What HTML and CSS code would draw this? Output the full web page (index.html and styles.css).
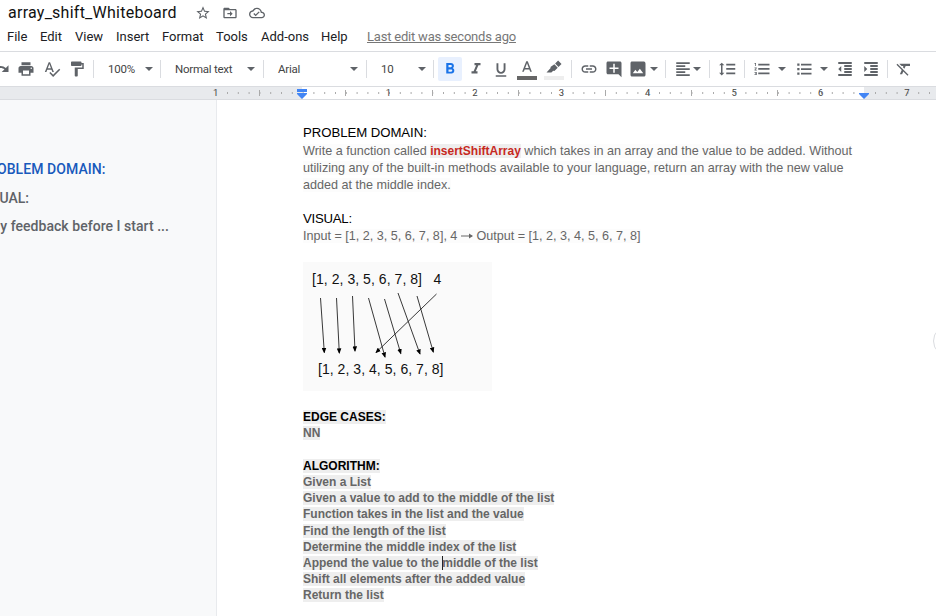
FILE: index.html
```html
<!DOCTYPE html>
<html lang="en">
<head>
<meta charset="utf-8">
<title>array_shift_Whiteboard</title>
<link rel="stylesheet" href="styles.css">
</head>
<body>
<header class="header">
  <div class="title-row">
    <h1 class="title">array_shift_Whiteboard</h1>
    <svg class="title-icon star" viewBox="0 0 24 24"><path d="M22 9.24l-7.19-.62L12 2 9.19 8.63 2 9.24l5.46 4.73L5.82 21 12 17.27 18.18 21l-1.63-7.03L22 9.24zM12 15.4l-3.76 2.27 1-4.28-3.32-2.88 4.38-.38L12 6.1l1.71 4.04 4.38.38-3.32 2.88 1 4.28L12 15.4z"/></svg>
    <svg class="title-icon folder" viewBox="0 0 24 24"><path d="M20 6h-8l-2-2H4c-1.100 0-2 .9-2 2v12c0 1.100.9 2 2 2h16c1.100 0 2-.9 2-2V8c0-1.100-.9-2-2-2zm0 12H4V8h16v10zM12 17l4-4-4-4v3H8v2h4v3z"/></svg>
    <svg class="title-icon cloud" viewBox="0 0 24 24"><path d="M19.350 10.040C18.670 6.590 15.640 4 12 4 9.110 4 6.600 5.640 5.350 8.040 2.340 8.360 0 10.910 0 14c0 3.310 2.690 6 6 6h13c2.760 0 5-2.240 5-5 0-2.640-2.050-4.780-4.650-4.960zM19 18H6c-2.210 0-4-1.790-4-4 0-2.050 1.530-3.760 3.560-3.970l1.070-.11.5-.95C8.080 7.140 9.940 6 12 6c2.620 0 4.880 1.860 5.390 4.430l.3 1.500 1.530.11c1.560.1 2.780 1.410 2.780 2.960 0 1.650-1.350 3-3 3zM10 14.180l-2.090-2.090L6.500 13.500 10 17l6.010-6.010-1.410-1.410z"/></svg>
  </div>
  <nav class="menu">
    <span class="m-file">File</span><span class="m-edit">Edit</span><span class="m-view">View</span><span class="m-insert">Insert</span><span class="m-format">Format</span><span class="m-tools">Tools</span><span class="m-addons">Add-ons</span><span class="m-help">Help</span><span class="last-edit">Last edit was seconds ago</span>
  </nav>
</header>

<div class="toolbar">
  <span class="tool redo"><svg viewBox="0 0 24 24"><path d="M18.400 10.600C16.550 8.990 14.150 8 11.500 8c-4.650 0-8.580 3.030-9.960 7.220L3.900 16c1.050-3.190 4.050-5.500 7.600-5.500 1.950 0 3.730.72 5.120 1.880L13 16h9V7l-3.600 3.600z"/></svg></span>
  <span class="tool w26"><svg viewBox="0 0 24 24"><path d="M19 8H5c-1.660 0-3 1.340-3 3v6h4v4h12v-4h4v-6c0-1.660-1.340-3-3-3zm-3 11H8v-5h8v5zm3-7c-.55 0-1-.45-1-1s.45-1 1-1 1 .45 1 1-.45 1-1 1zm-1-9H6v4h12V3z"/></svg></span>
  <span class="tool w26"><svg viewBox="0 0 24 24"><path d="M12.450 16h2.090L9.430 3H7.570L2.460 16h2.090l1.120-3h5.640l1.140 3zm-6.020-5L8.500 5.480 10.570 11H6.430zm15.160.59l-8.090 8.090L9.830 16l-1.410 1.410 5.090 5.090L23 13l-1.410-1.410z"/></svg></span>
  <span class="tool w24"><svg viewBox="0 0 24 24"><path d="M18 4V3c0-.55-.45-1-1-1H5c-.55 0-1 .45-1 1v4c0 .55.45 1 1 1h12c.55 0 1-.45 1-1V6h1v4H9v11c0 .55.45 1 1 1h2c.55 0 1-.45 1-1v-9h8V4h-3z"/></svg></span>
  <i class="sep"></i>
  <span class="select zoom">100%<b class="caret"></b></span>
  <i class="sep"></i>
  <span class="select style">Normal text<b class="caret"></b></span>
  <i class="sep"></i>
  <span class="select font">Arial<b class="caret"></b></span>
  <i class="sep"></i>
  <span class="select size">10<b class="caret"></b></span>
  <i class="sep"></i>
  <span class="tool active"><svg viewBox="0 0 24 24"><path d="M15.600 10.790c.97-.67 1.650-1.770 1.650-2.790 0-2.260-1.750-4-4-4H7v14h7.040c2.090 0 3.710-1.700 3.710-3.790 0-1.520-.86-2.820-2.150-3.420zM10 6.500h3c.83 0 1.500.67 1.500 1.500s-.67 1.500-1.500 1.500h-3v-3zm3.500 9H10v-3h3.500c.83 0 1.500.67 1.500 1.500s-.67 1.500-1.500 1.500z"/></svg></span>
  <span class="tool w25"><svg viewBox="0 0 24 24"><path d="M10 4v3h2.210l-3.420 8H6v3h8v-3h-2.210l3.420-8H18V4z"/></svg></span>
  <span class="tool w25 underline"><svg viewBox="0 0 24 24"><path d="M12 17c3.310 0 6-2.690 6-6V3h-2.500v8c0 1.930-1.570 3.500-3.500 3.500S8.500 12.930 8.500 11V3H6v8c0 3.310 2.690 6 6 6zm-7 2v2h14v-2H5z"/></svg></span>
  <span class="tool swatch text-color"><svg viewBox="0 0 24 24"><path d="M11 3L5.500 17h2.250l1.120-3h6.250l1.120 3h2.250L13 3h-2zm-1.380 9L12 5.670 14.380 12H9.620z"/></svg></span>
  <span class="tool swatch highlight"><svg viewBox="0 0 24 24"><path d="M17.500 2l4.500 4.500-4 4L13.500 6zM12.500 7l4.500 4.500-4.500 4.500-1.500-.5L8.500 18H2l5.500-6-.2-1.400z"/></svg></span>
  <i class="sep"></i>
  <span class="tool w25"><svg viewBox="0 0 24 24"><path d="M3.900 12c0-1.710 1.390-3.100 3.100-3.100h4V7H7c-2.760 0-5 2.240-5 5s2.240 5 5 5h4v-1.900H7c-1.710 0-3.100-1.390-3.100-3.100zM8 13h8v-2H8v2zm9-6h-4v1.900h4c1.710 0 3.100 1.390 3.100 3.100s-1.390 3.100-3.100 3.100h-4V17h4c2.760 0 5-2.240 5-5s-2.240-5-5-5z"/></svg></span>
  <span class="tool w25"><svg viewBox="0 0 24 24"><path d="M22 4c0-1.100-.9-2-2-2H4c-1.100 0-2 .9-2 2v13c0 1.100.9 2 2 2h14l4 4V4zm-4 8h-5v5h-2v-5H6v-2h5V5h2v5h5v2z"/></svg></span>
  <span class="tool image"><svg viewBox="0 0 24 24"><path d="M22 19V5c0-1.660-.9-3-2-3H4C2.900 2 2 2.900 2 4v16c0 1.100.9 2 2 2h16c1.100 0 2-.9 2-2v-1zM8.500 13l2.500 3.010L14.500 11.500 19 17.500H5L8.500 13z"/></svg><b class="caret"></b></span>
  <i class="sep"></i>
  <span class="tool align"><svg viewBox="0 0 24 24"><path d="M3 3h18v2.200H3zM3 7h12v2.200H3zM3 11h18v2.200H3zM3 15h12v2.200H3zM3 19h18v2.200H3z"/></svg><b class="caret"></b></span>
  <i class="sep narrow"></i>
  <span class="tool w27"><svg viewBox="0 0 24 24"><path d="M6 7h2.500L5 3.500 1.500 7H4v10H1.500L5 20.500 8.500 17H6V7zm5-2v2.200h12V5H11zm0 14h12v-2.200H11V19zm0-6h12v-2.200H11V13z"/></svg></span>
  <i class="sep"></i>
  <span class="tool numbers"><svg viewBox="0 0 24 24"><path d="M2 17h2v.5H3v1h1v.5H2v1h3v-4H2v1zm1-9h1V4H2v1h1v3zm-1 3h1.800L2 13.100v.9h3v-1H3.200L5 10.900V10H2v1zm5-6v2.200h15V5H7zm0 14h15v-2.200H7V19zm0-6h15v-2.200H7V13z"/></svg><b class="caret"></b></span>
  <span class="tool bullets"><svg viewBox="0 0 24 24"><path d="M3 4.500h3v3H3zM3 10.500h3v3H3zM3 16.500h3v3H3zM8 5h14v2.200H8zM8 11h14v2.200H8zM8 17h14v2.200H8z"/></svg><b class="caret"></b></span>
  <span class="tool w26"><svg viewBox="0 0 24 24"><path d="M11 17.200h10v-2.400H11v2.400zm-8-5.200l4 4V8l-4 4zm0 9.200h18v-2.400H3v2.400zM3 2.800v2.400h18V2.800H3zm8 6.400h10V6.800H11v2.400zm0 4h10v-2.400H11v2.400z"/></svg></span>
  <span class="tool w25"><svg viewBox="0 0 24 24"><path d="M3 21.200h18v-2.400H3v2.400zM3 8v8l4-4-4-4zm8 9.200h10v-2.400H11v2.400zM3 2.800v2.400h18V2.800H3zm8 6.400h10V6.800H11v2.400zm0 4h10v-2.400H11v2.400z"/></svg></span>
  <i class="sep"></i>
  <span class="tool w24"><svg viewBox="0 0 24 24"><path d="M3.270 5L2 6.270l6.970 6.970L6.500 19h3l1.570-3.660L16.730 21 18 19.730 3.550 5.270 3.270 5zM6 5v.18L8.820 8h2.400l-.72 1.680 2.100 2.100L14.210 8H20V5H6z"/></svg></span>
</div>

<svg class="ruler" width="936" height="14" viewBox="0 0 936 14">
  <rect class="margin" x="0" y="0" width="302" height="14"/>
  <rect class="margin" x="864" y="0" width="72" height="14"/>
  <path class="tick minor" d="M227 7h636M875 7h61"/>
  <path class="tick half" d="M259.500 4v6M345.500 4v6M432.500 4v6M518.500 4v6M605.500 4v6M691.500 4v6M777.500 4v6"/>
  <path class="edge" d="M0 .5h936M0 13.500h936"/>
  <g class="numbers-row">
    <text x="215.600" y="10">1</text><text x="388.500" y="10">1</text><text x="475" y="10">2</text><text x="561.300" y="10">3</text><text x="647.700" y="10">4</text><text x="734.200" y="10">5</text><text x="820.600" y="10">6</text><text x="907" y="10">7</text>
  </g>
  <path class="marker" d="M297 3h10v3h-10zM297 7h10v1l-5 5-5-5zM859 7h10v1l-5 5-5-5z"/>
</svg>

<main class="workspace">
  <aside class="outline">
    <div class="entry current">PROBLEM DOMAIN:</div>
    <div class="entry visual">VISUAL:</div>
    <div class="entry feedback">My feedback before I start ...</div>
  </aside>
  <article class="page">
    <h2 class="heading problem">PROBLEM DOMAIN:</h2>
    <p class="body"><span>Write a function called <strong>insertShiftArray</strong> which takes in an array and the value to be added. Without</span></p>
    <p class="body"><span>utilizing any of the built-in methods available to your language, return an array with the new value</span></p>
    <p class="body"><span>added at the middle index.</span></p>
    <h2 class="heading second">VISUAL:</h2>
    <p class="body"><span>Input = [1, 2, 3, 5, 6, 7, 8], 4 <svg class="arrow" viewBox="0 0 12 8"><path d="M0 4h11"/><path class="tip" d="M8 1.500L12 4 8 6.500z"/></svg> Output = [1, 2, 3, 4, 5, 6, 7, 8]</span></p>
    <svg class="figure" width="189" height="129" viewBox="0 0 189 129">
      <defs><marker id="head" viewBox="0 0 6 5" refX="5" refY="2.500" markerWidth="5.500" markerHeight="5" orient="auto" markerUnits="userSpaceOnUse"><path d="M0 0l6 2.500L0 5z"/></marker></defs>
      <text x="9" y="22.200" textLength="110">[1, 2, 3, 5, 6, 7, 8]</text>
      <text x="130.500" y="22.200">4</text>
      <text x="15" y="112.200" textLength="125.500">[1, 2, 3, 4, 5, 6, 7, 8]</text>
      <g class="arrows"><path d="M17.500 36L21.300 90.500"/><path d="M33.500 36L36.300 91"/><path d="M49.500 34L52 89"/><path d="M65.500 36L82 95"/><path d="M81.500 37L97.800 91.500"/><path d="M95 31L117 92"/><path d="M114 34L130.300 90"/><path d="M133.500 32L73 90.500"/></g>
    </svg>
    <section class="notes">
      <p class="black"><span>EDGE CASES:</span></p>
      <p><span>NN</span></p>
      <p>&nbsp;</p>
      <p class="black"><span>ALGORITHM:</span></p>
      <p><span>Given a List</span></p>
      <p><span>Given a value to add to the middle of the list</span></p>
      <p><span>Function takes in the list and the value</span></p>
      <p><span>Find the length of the list</span></p>
      <p><span>Determine the middle index of the list</span></p>
      <p><span>Append the value to the <i class="cursor"></i>middle of the list</span></p>
      <p><span>Shift all elements after the added value</span></p>
      <p><span>Return the list</span></p>
    </section>
    <div class="side-button"></div>
  </article>
</main>
</body>
</html>
```
FILE: styles.css
```css
* { box-sizing: border-box; }
body { margin: 0; width: 936px; height: 616px; overflow: hidden; background: #fff; font-family: Roboto, "Liberation Sans", sans-serif; color: #202124; }
h1, h2, p { margin: 0; font-weight: 400; }
svg { display: block; flex: none; }

.header { height: 51px; }
.title-row { display: flex; align-items: center; height: 26px; padding-left: 8px; }
.title { width: 187px; font-size: 16px; line-height: 26px; letter-spacing: .25px; color: #111; }
.title-icon { width: 16px; height: 16px; fill: #5f6368; }
.folder { margin-left: 11px; }
.cloud { margin-left: 11px; }
.menu { display: flex; height: 22px; line-height: 21px; font-size: 13px; padding-left: 7px; white-space: nowrap; }
.m-file { width: 33px; }
.m-edit { width: 35px; }
.m-view { width: 41px; }
.m-insert { width: 46px; }
.m-format { width: 54px; }
.m-tools { width: 45px; }
.m-addons { width: 60px; }
.m-help { width: 46px; }
.last-edit { color: #777; text-decoration: underline; letter-spacing: -.2px; }

.toolbar { display: flex; align-items: center; height: 35px; border-top: 1px solid #dadce0; overflow: hidden; color: #444; font-size: 11.500px; letter-spacing: -.25px; }
.tool { display: flex; flex: none; align-items: center; justify-content: center; height: 24px; }
.tool svg { width: 18px; height: 18px; fill: #5f6368; }
.redo { width: 25px; margin-left: -12px; }
.w24 { width: 24px; }
.w25 { width: 25px; }
.w26 { width: 26px; }
.w27 { width: 27px; }
.underline { padding-top: 2px; }
.sep { flex: none; width: 1px; height: 18px; margin: 0 4px; background: #dadce0; }
.narrow { margin-right: 3px; }
.select { display: flex; flex: none; align-items: center; height: 24px; padding: 0 4px 0 10px; }
.caret { width: 0; height: 0; margin-left: auto; border: 4px solid transparent; border-top-color: #5f6368; border-bottom: 0; }
.zoom { width: 58px; padding-right: 3px; }
.style, .font { width: 94px; }
.size { width: 58px; padding: 0 3px 0 10px; }
.active { width: 24px; margin-right: 1px; background: #e8f0fe; border-radius: 2px; }
.active svg { fill: #1a73e8; }
.swatch { width: 27px; flex-direction: column; justify-content: flex-start; padding-top: 2px; }
.swatch::after { content: ""; width: 20px; height: 4px; margin-top: -1px; background: #666; }
.highlight::after { background: #eee; }
.image { width: 35px; padding: 0 3px; }
.align { width: 35px; padding: 0 4px; }
.numbers { width: 41px; padding: 0 4px; }
.bullets { width: 42px; padding: 0 4px 0 5px; }

.ruler .margin { fill: #e8eaed; }
.ruler .tick { stroke: #aaa; }
.ruler .minor { stroke-width: 2; stroke-dasharray: 1 9.800; }
.ruler .edge { stroke: #dadce0; }
.ruler .numbers-row { font-size: 9.500px; fill: #444; text-anchor: middle; }
.ruler .marker { fill: #4285f4; }

.workspace { display: flex; height: 516px; }
.outline { width: 217px; padding-top: 60px; overflow: hidden; background: #f8f9fa; border-right: 1px solid #e8eaed; white-space: nowrap; color: #5f6368; font-size: 14px; font-weight: 500; }
.entry { height: 28.500px; line-height: 19px; }
.current { color: #185abc; margin-left: -21px; letter-spacing: .08px; }
.visual { margin-left: -22px; }
.feedback { margin-left: -12px; letter-spacing: .04px; }

.page { position: relative; flex: 1; padding: 23px 0 0 86px; font-family: "Liberation Sans", Arial, sans-serif; white-space: nowrap; }
.heading { height: 20px; line-height: 19px; font-size: 13.200px; letter-spacing: -.05px; color: #000; }
.second { margin-top: 15px; height: 19px; letter-spacing: -.25px; }
.body { height: 17px; line-height: 17px; font-size: 12.600px; color: #666; }
.body span { background: #fcfcfc; }
.body strong { font-size: 12px; background: #eee; color: #c7291e; }
.arrow { display: inline-block; width: 12px; height: 8px; fill: none; stroke: #666; }
.arrow .tip { fill: #666; stroke: none; }
.figure { margin-top: 17px; background: #fafafa; font-size: 14px; }
.figure text { fill: #111; }
.arrows { stroke: #222; stroke-width: .9; }
.arrows path { marker-end: url(#head); }
.notes { padding-top: 18.300px; font-size: 12px; font-weight: 700; color: #666; }
.notes p { height: 16.200px; line-height: 16.200px; font-weight: 700; }
.notes span { background: #eee; }
.notes .black { color: #000; }
.cursor { display: inline-block; width: 1px; height: 14px; margin-right: -1px; vertical-align: -3px; background: #222; }
.side-button { position: absolute; left: 716px; top: 225px; width: 32px; height: 32px; border: 1px solid #dadce0; border-radius: 50%; }
```
